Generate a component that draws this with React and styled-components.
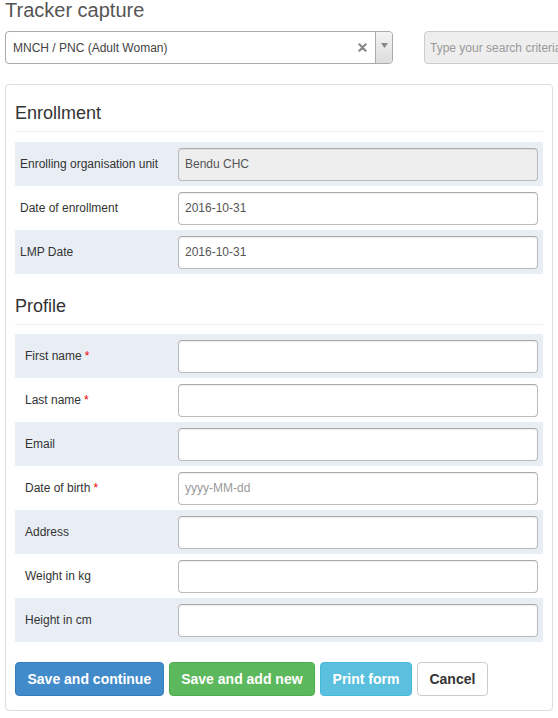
import React from "react";
import styled, { createGlobalStyle } from "styled-components";

const Global = createGlobalStyle`
  html, body { margin: 0; padding: 0; overflow: hidden; background: #fff; }
  body { font-family: "Liberation Sans", Arial, sans-serif; color: #333; }
  * { box-sizing: border-box; }
`;

const Page = styled.div`
  padding: 0 5px;
  width: 558px;
  overflow: hidden;
`;

const Title = styled.h1`
  margin: 0;
  font-size: 20px;
  line-height: 20px;
  font-weight: normal;
  color: #555;
`;

const Toolbar = styled.div`
  display: flex;
  align-items: center;
  margin-top: 11px;
  gap: 31px;
  white-space: nowrap;
`;

const Select = styled.div`
  width: 388px;
  height: 33px;
  flex: none;
  display: flex;
  align-items: center;
  border: 1px solid #aaa;
  border-radius: 4px;
  background: #fff;
  overflow: hidden;
`;

const SelectText = styled.span`
  flex: 1;
  padding-left: 7px;
  font-size: 12px;
  color: #444;
`;

const Clear = styled.span`
  width: 14px;
  display: flex;
  justify-content: center;
  margin-right: 6px;
`;

const ArrowBox = styled.span`
  width: 17px;
  align-self: stretch;
  border-left: 1px solid #aaa;
  background: linear-gradient(#f4f4f4, #dcdcdc);
  display: flex;
  justify-content: center;
  padding-top: 11px;
`;

const Search = styled.input`
  flex: none;
  width: 220px;
  height: 33px;
  border: 1px solid #ccc;
  border-radius: 4px;
  background: #eee;
  padding: 0 5px;
  font-family: "Liberation Sans", Arial, sans-serif;
  font-size: 12px;
  color: #555;
  &::placeholder { color: #999; }
`;

const Panel = styled.div`
  margin-top: 20px;
  width: 548px;
  border: 1px solid #ddd;
  border-radius: 4px;
  padding: 0 9px 14px;
  box-shadow: 0 1px 1px rgba(0, 0, 0, 0.05);
`;

const SectionTitle = styled.h2`
  margin: ${(p) => p.$top}px 0 ${(p) => p.$bottom}px;
  font-size: 18px;
  line-height: 20px;
  font-weight: normal;
  color: #333;
  padding-bottom: 8px;
  border-bottom: 1px solid #eee;
`;

const Row = styled.div`
  display: grid;
  grid-template-columns: 163px 1fr;
  align-items: center;
  height: 44px;
  padding-right: 5px;
  background: ${(p) => (p.$shade ? "#e9eef5" : "#fff")};
`;

const Label = styled.label`
  padding-left: ${(p) => p.$indent}px;
  font-size: 12px;
  color: #333;
`;

const Req = styled.span`
  color: #e00;
  margin-left: 3px;
`;

const Field = styled.input`
  width: 100%;
  height: 33px;
  border: 1px solid #bbb;
  border-top-color: #aaa;
  border-radius: 4px;
  padding: 0 6px;
  background: ${(p) => (p.disabled ? "#eee" : "#fff")};
  box-shadow: inset 0 1px 1px rgba(0, 0, 0, 0.075);
  font-family: "Liberation Sans", Arial, sans-serif;
  font-size: 12px;
  color: #555;
  &::placeholder { color: #999; }
`;

const Buttons = styled.div`
  display: flex;
  gap: 5px;
  margin-top: 20px;
`;

const variants = {
  primary: { bg: "#428bca", border: "#357ebd", color: "#fff" },
  success: { bg: "#5cb85c", border: "#4cae4c", color: "#fff" },
  info: { bg: "#5bc0de", border: "#46b8da", color: "#fff" },
  default: { bg: "#fff", border: "#ccc", color: "#333" },
};

const Button = styled.button`
  height: 34px;
  padding: 0 11.5px;
  border-radius: 4px;
  border: 1px solid ${(p) => variants[p.$v].border};
  background: ${(p) => variants[p.$v].bg};
  color: ${(p) => variants[p.$v].color};
  font-family: "Liberation Sans", Arial, sans-serif;
  font-size: 14px;
  font-weight: bold;
  cursor: pointer;
`;

const enrollment = [
  { label: "Enrolling organisation unit", value: "Bendu CHC", disabled: true },
  { label: "Date of enrollment", value: "2016-10-31" },
  { label: "LMP Date", value: "2016-10-31" },
];

const profile = [
  { label: "First name", req: true },
  { label: "Last name", req: true },
  { label: "Email" },
  { label: "Date of birth", req: true, ph: "yyyy-MM-dd" },
  { label: "Address" },
  { label: "Weight in kg" },
  { label: "Height in cm" },
];

export default function App() {
  return (
    <>
      <Global />
      <Page>
        <Title>Tracker capture</Title>
        <Toolbar>
          <Select>
            <SelectText>MNCH / PNC (Adult Woman)</SelectText>
            <Clear>
              <svg width="9" height="9" viewBox="0 0 10 10">
                <path d="M1.5 1.5 L8.5 8.5 M8.5 1.5 L1.5 8.5" stroke="#888" strokeWidth="2.4" strokeLinecap="round" />
              </svg>
            </Clear>
            <ArrowBox>
              <svg width="7" height="5" viewBox="0 0 7 5">
                <path d="M0 0 L7 0 L3.5 5 Z" fill="#888" />
              </svg>
            </ArrowBox>
          </Select>
          <Search placeholder="Type your search criteria" />
        </Toolbar>
        <Panel>
          <SectionTitle $top={18} $bottom={10}>Enrollment</SectionTitle>
          {enrollment.map((f, i) => (
            <Row key={f.label} $shade={i % 2 === 0}>
              <Label $indent={5}>{f.label}</Label>
              <Field defaultValue={f.value} disabled={f.disabled} />
            </Row>
          ))}
          <SectionTitle $top={22} $bottom={9}>Profile</SectionTitle>
          {profile.map((f, i) => (
            <Row key={f.label} $shade={i % 2 === 0}>
              <Label $indent={10}>
                {f.label}
                {f.req && <Req>*</Req>}
              </Label>
              <Field placeholder={f.ph} />
            </Row>
          ))}
          <Buttons>
            <Button $v="primary">Save and continue</Button>
            <Button $v="success">Save and add new</Button>
            <Button $v="info">Print form</Button>
            <Button $v="default">Cancel</Button>
          </Buttons>
        </Panel>
      </Page>
    </>
  );
}
